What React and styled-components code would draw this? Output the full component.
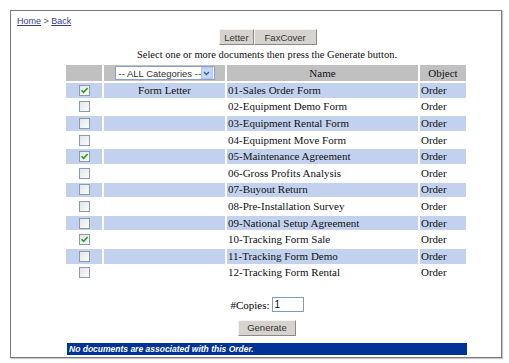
import React from 'react';
import styled, { createGlobalStyle } from 'styled-components';

const GlobalStyle = createGlobalStyle`
    body {
        margin: 0;
        background: #fff;
        font-family: "Liberation Serif", "Times New Roman", serif;
    }
`;

const Frame = styled.div`
    margin: 10px;
    width: 478px;
    height: 346px;
    border: 1px solid #7a7a7a;
    box-shadow: 1px 1px 1px #c8c8c8;
    padding: 0 6px;
    box-sizing: content-box;
    display: flex;
    flex-direction: column;
`;
const Crumbs = styled.div`
    font: 9px "Liberation Sans", Arial, sans-serif;
    color: #555;
    padding-top: 4px;
    line-height: 12px;
    a {
        color: #3b3b8c;
    }
`;
const Content = styled.div`
    width: 404px;
    margin-left: 47px;
    display: flex;
    flex-direction: column;
    align-items: center;
`;
const ButtonRow = styled.div`
    display: flex;
    margin-top: 2px;
    margin-left: 4px;
`;
const Button = styled.button`
    height: 16px;
    padding: 0 ${p => p.$pad || 4}px;
    font: 9.5px "Liberation Sans", Arial, sans-serif;
    color: #333;
    background: #d6d3ce;
    border: 1px solid;
    border-color: #f4f4f4 #8a8a8a #8a8a8a #f4f4f4;
    margin: 0;
    line-height: 13px;
`;
const Hint = styled.div`
    font-size: 10.5px;
    line-height: 17px;
    margin: 1px 0 0 2px;
    color: #111;
`;
const Table = styled.table`
    border-spacing: 2px;
    width: 404px;
    font-size: 11px;
    color: #111;
`;
const Th = styled.th`
    background: #c0c0c0;
    height: 16px;
    padding: 0;
    font-weight: normal;
    width: ${p => p.$w}px;
    text-align: center;
`;
const Td = styled.td`
    height: 14.6px;
    padding: 0 ${p => p.$pad || 0}px;
    line-height: 13px;
    background: ${p => (p.$shade ? '#c2d2ee' : '#fff')};
    text-align: ${p => p.$align || 'left'};
`;
const Box = styled.span`
    display: inline-block;
    width: 9px;
    height: 9px;
    border: 1px solid #8e9aa6;
    background: linear-gradient(135deg, #e2e6ea, #fbfbfb);
    vertical-align: middle;
    position: relative;
    top: -1px;
    svg {
        display: block;
    }
`;
const Select = styled.div`
    display: inline-flex;
    align-items: center;
    width: 95px;
    height: 12px;
    border: 1px solid #8ba2c6;
    background: #fff;
    font: 9.5px "Liberation Sans", Arial, sans-serif;
    white-space: nowrap;
    color: #333;
    vertical-align: middle;
    justify-content: space-between;
    padding-left: 3px;
    box-sizing: content-box;
`;
const Arrow = styled.span`
    width: 10px;
    height: 10px;
    margin-right: 1px;
    background: #c5d6fb;
    border: 1px solid #b2c7f0;
    display: flex;
    align-items: center;
    justify-content: center;
`;
const CopiesRow = styled.div`
    display: flex;
    align-items: center;
    gap: 2px;
    margin-top: 15px;
    margin-left: 2px;
    font-size: 11px;
`;
const Input = styled.div`
    width: 28px;
    height: 13px;
    border: 1px solid #7f9db9;
    font: 10px "Liberation Sans", Arial, sans-serif;
    padding-left: 2px;
    line-height: 13px;
`;
const GenerateRow = styled.div`
    margin-top: 5px;
    margin-left: 2px;
`;
const Notice = styled.div`
    align-self: stretch;
    margin: 7px 1px 0 3px;
    height: 12px;
    background: #003399;
    color: #fff;
    font: italic bold 8.5px "Liberation Sans", Arial, sans-serif;
    line-height: 12px;
    padding-left: 2px;
`;

const forms = [
    '01-Sales Order Form',
    '02-Equipment Demo Form',
    '03-Equipment Rental Form',
    '04-Equipment Move Form',
    '05-Maintenance Agreement',
    '06-Gross Profits Analysis',
    '07-Buyout Return',
    '08-Pre-Installation Survey',
    '09-National Setup Agreement',
    '10-Tracking Form Sale',
    '11-Tracking Form Demo',
    '12-Tracking Form Rental',
];
const checked = [0, 4, 9];

const Check = ({ on }) => (
    <Box>
        {on && (
            <svg width="9" height="9" viewBox="0 0 9 9">
                <path d="M1.5 4.2 L3.6 6.4 L7.6 2" fill="none" stroke="#21a121" strokeWidth="1.6" />
            </svg>
        )}
    </Box>
);

export default function App() {
    return (
        <>
            <GlobalStyle />
            <Frame>
                <Crumbs>
                    <a href="#">Home</a> &gt; <a href="#">Back</a>
                </Crumbs>
                <Content>
                    <ButtonRow>
                        <Button>Letter</Button>
                        <Button $pad={10}>FaxCover</Button>
                    </ButtonRow>
                    <Hint>Select one or more documents then press the Generate button.</Hint>
                    <Table>
                        <thead>
                            <tr>
                                <Th $w={36}></Th>
                                <Th $w={121}>
                                    <Select>
                                        -- ALL Categories --
                                        <Arrow>
                                            <svg width="7" height="5" viewBox="0 0 7 5">
                                                <path d="M1 1 L3.5 3.5 L6 1" fill="none" stroke="#4d6185" strokeWidth="1.4" />
                                            </svg>
                                        </Arrow>
                                    </Select>
                                </Th>
                                <Th $w={191}>Name</Th>
                                <Th $w={46}>Object</Th>
                            </tr>
                        </thead>
                        <tbody>
                            {forms.map((name, i) => {
                                const shade = i % 2 === 0;
                                return (
                                    <tr key={name}>
                                        <Td $shade={shade} $align="center">
                                            <Check on={checked.includes(i)} />
                                        </Td>
                                        <Td $shade={shade} $align="center">{i === 0 ? 'Form Letter' : ''}</Td>
                                        <Td $shade={shade} $pad={1}>{name}</Td>
                                        <Td $shade={shade} $pad={1}>Order</Td>
                                    </tr>
                                );
                            })}
                        </tbody>
                    </Table>
                    <CopiesRow>
                        #Copies: <Input>1</Input>
                    </CopiesRow>
                    <GenerateRow>
                        <Button $pad={8}>Generate</Button>
                    </GenerateRow>
                    <Notice>No documents are associated with this Order.</Notice>
                </Content>
            </Frame>
        </>
    );
}
